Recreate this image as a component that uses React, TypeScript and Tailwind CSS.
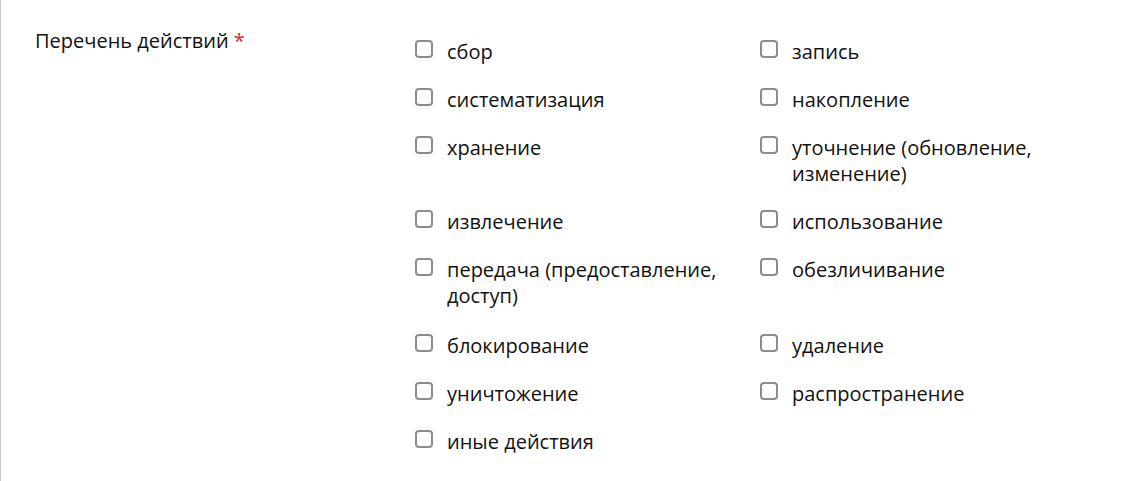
const actions = [
  "сбор",
  "запись",
  "систематизация",
  "накопление",
  "хранение",
  "уточнение (обновление, изменение)",
  "извлечение",
  "использование",
  "передача (предоставление, доступ)",
  "обезличивание",
  "блокирование",
  "удаление",
  "уничтожение",
  "распространение",
  "иные действия",
];

export default function App() {
  return (
    <div className="min-h-[481px] w-full bg-white border-l border-[#c8c8c8] font-['Open_Sans',sans-serif] text-[20px] leading-[26px] text-[#111]">
      <div className="flex pl-[34px] pt-[28px]">
        <div className="w-[380px] shrink-0">
          Перечень действий <span className="text-[#e8202a]">*</span>
        </div>
        <div className="grid grid-cols-[321px_321px] gap-x-[24px] gap-y-[22px] pt-[11px]">
          {actions.map((a, i) => (
            <label
              key={a}
              className={`flex items-start gap-[14px] cursor-pointer ${i === 10 || i === 11 ? "mt-[2px]" : ""}`}
            >
              <input
                type="checkbox"
                className="appearance-none mt-[1px] w-[18px] h-[18px] shrink-0 rounded-[4px] border-2 border-[#8c8c8c] bg-white"
              />
              <span className="max-w-[285px]">{a}</span>
            </label>
          ))}
        </div>
      </div>
    </div>
  );
}
